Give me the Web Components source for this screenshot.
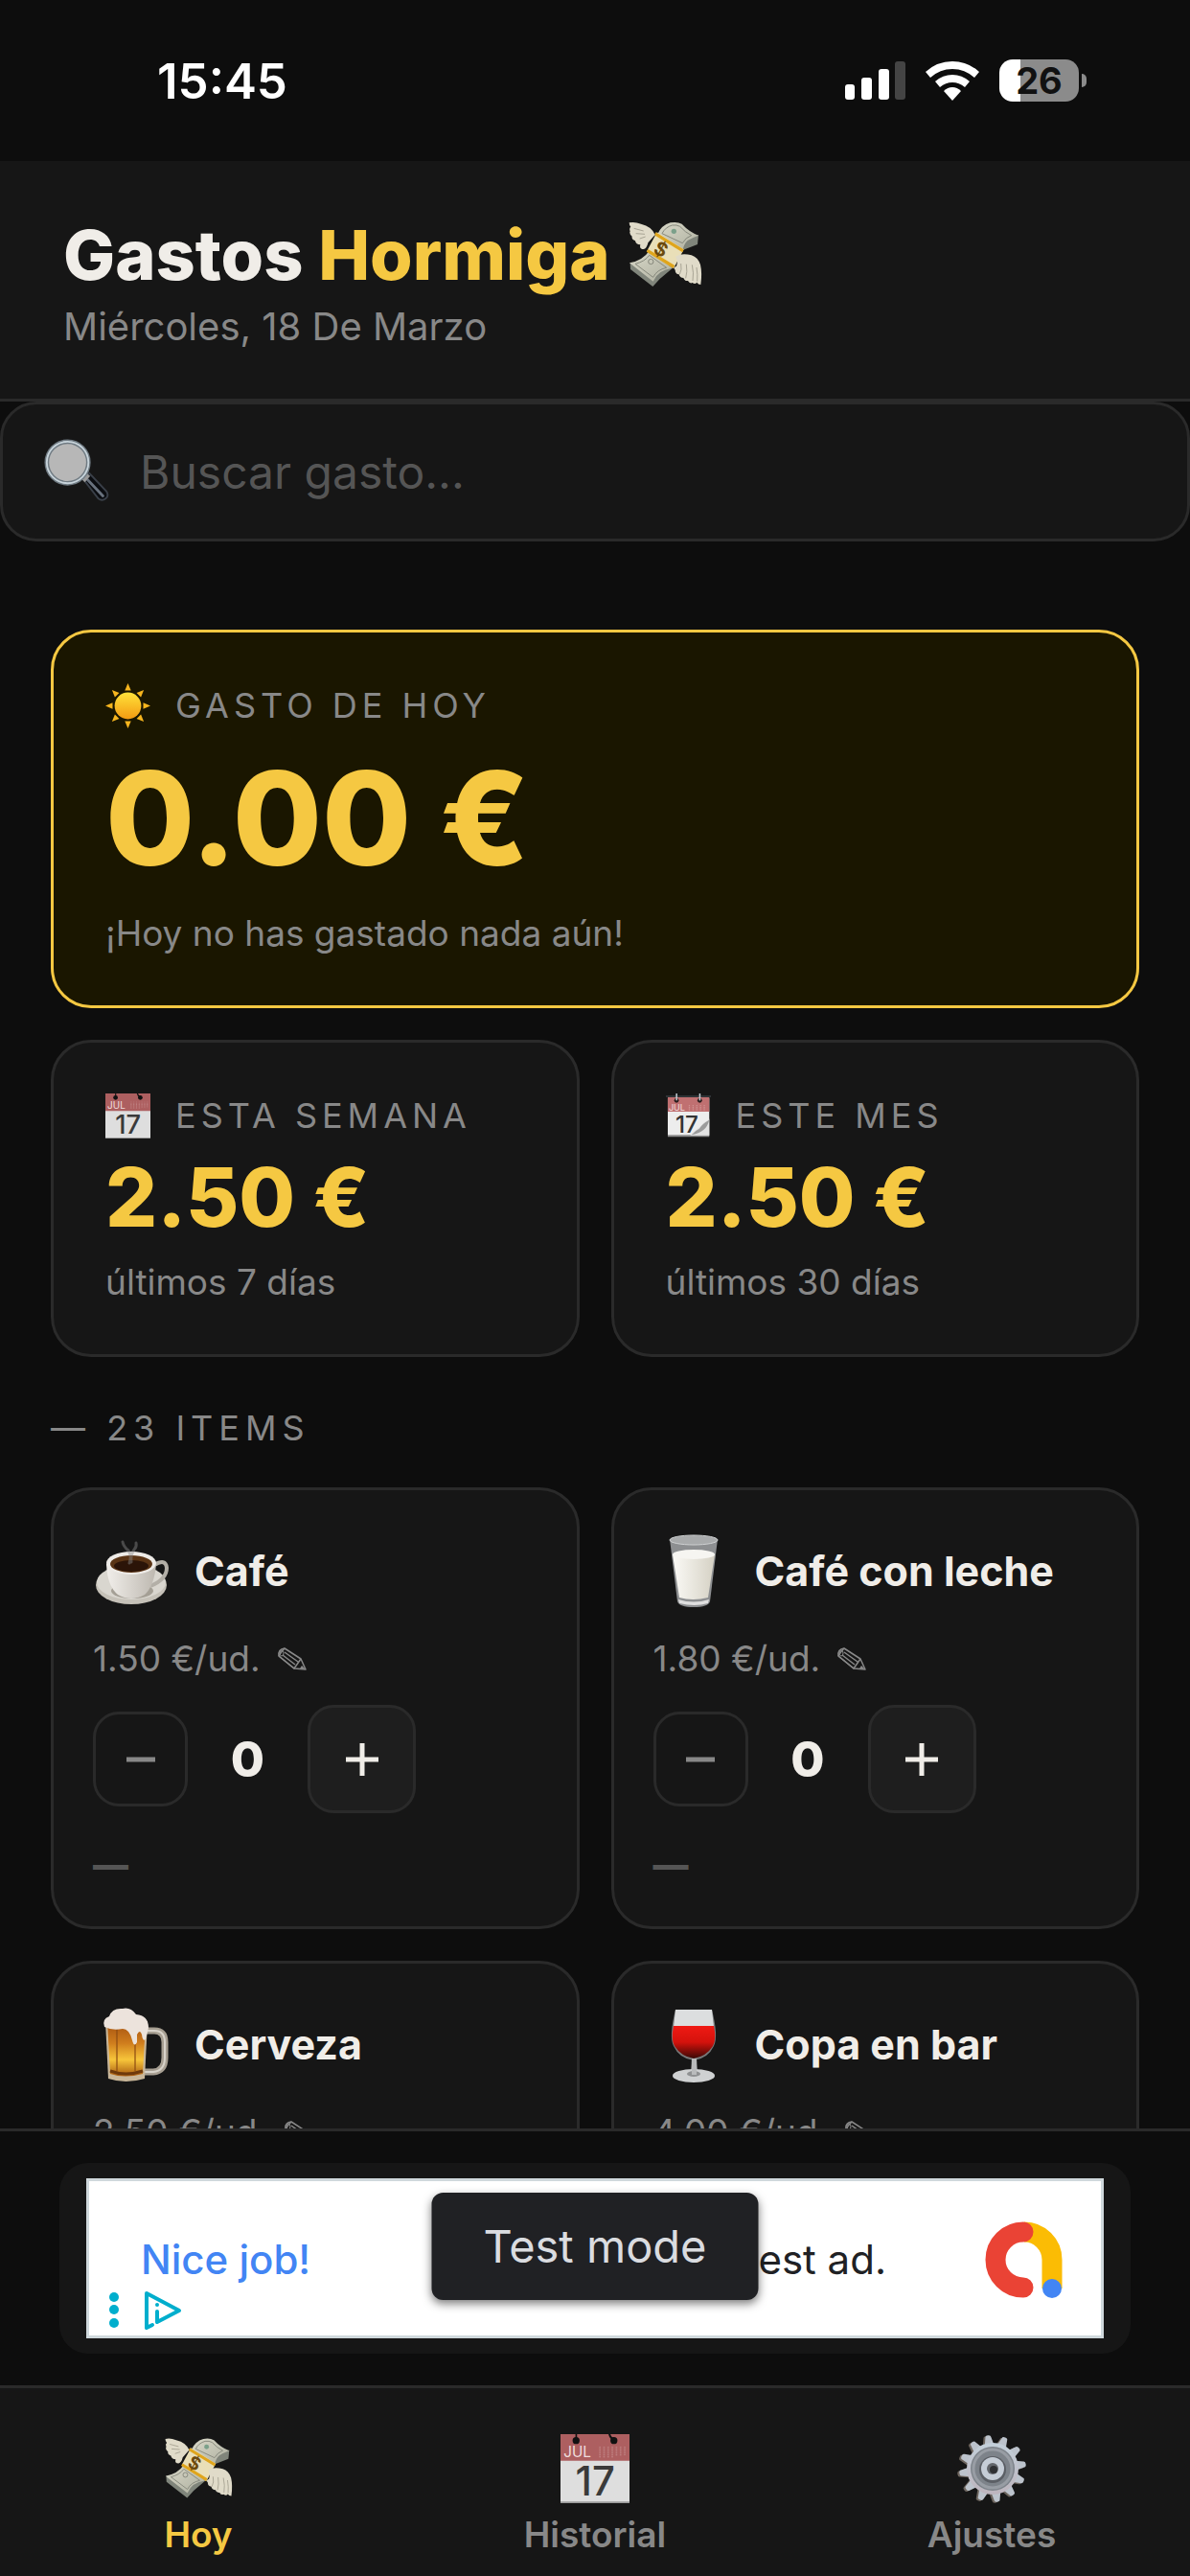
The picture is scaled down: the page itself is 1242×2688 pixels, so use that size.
<!DOCTYPE html>
<html lang="es">
<head>
  <meta charset="UTF-8">
  <meta name="viewport" content="width=device-width, initial-scale=1">
  <title>Gastos Hormiga</title>
  <style>
    * {
      margin: 0;
      padding: 0;
      box-sizing: border-box;
    }
    :root {
      --bg: #0d0d0d;
      --surface: #161616;
      --raised: #1e1e1e;
      --border: #2a2a2a;
      --accent: #f5c842;
      --text: #f0ede8;
      --muted: #888888;
      --dim: #555555;
    }
    body {
      background: var(--bg);
      color: var(--text);
      font-family: Inter, "Liberation Sans", sans-serif;
    }
  </style>
</head>
<body>
  <gastos-app></gastos-app>

  <script>
    const BILLS = `
      <defs>
        <linearGradient id="bill" x1="0" y1="0" x2="1" y2="1">
          <stop offset="0" stop-color="#d9d8c8"/><stop offset="1" stop-color="#aeb0a0"/>
        </linearGradient>
      </defs>
      <path d="M46 166l1 20 70 54 22-24 40-34-60-20z" fill="#80857b"/>
      <path d="M205 128l52-20 3-30-40 14z" fill="#80857b"/>
      <path d="M132 76q12-28 40-36 22-4 36 4 22 24 52 36-22 8-34 16-12 10-16 32z" fill="url(#bill)"/>
      <path d="M106 128q-20 30-62 38l74 58q14-36 60-42z" fill="url(#bill)"/>
      <path d="M146 74q10-20 32-26 14-2 24 4 16 18 36 28-18 6-28 24z" fill="none" stroke="#86887c" stroke-width="3"/>
      <path d="M106 142q-14 20-44 27l56 42q12-24 42-30z" fill="none" stroke="#86887c" stroke-width="3"/>
      <circle cx="183" cy="67" r="8" fill="#7ba08a"/>
      <circle cx="111" cy="162" r="8" fill="none" stroke="#86887c" stroke-width="3"/>
      <path d="M130 70l84 54-32 60-84-54z" fill="#e9dfb8"/>
      <path d="M126 70l88 54-4 9-88-54z" fill="#dfa51c"/>
      <path d="M102 123l84 51-5 9-84-52z" fill="#dfa51c"/>
      <text x="142" y="144" font-family="Inter, sans-serif" font-size="60" font-weight="700" fill="#6b4a0c" text-anchor="middle" transform="rotate(28 142 124)">$</text>
      <path d="M124 78q-10-26-44-34-20-8-37-4 0 8 5 13-6 5-2 14-4 8 6 16-2 10 10 14 2 12 16 12-4 14 10 14 10-2 14-20z" fill="#e0dbc9"/>
      <path d="M58 58l30 8M64 74l28 2M76 90l18-6" stroke="#a8a494" stroke-width="3" fill="none"/>
      <path d="M188 146q20-12 50-4 20 6 28 30 6 26 1 62-8 0-12-7-6 8-14 1-8 4-14-6-10 2-14-9-12 0-14-11-12-2-12-14-8-8 4-12 6-16-3-30z" fill="#e0dbc9"/>
      <path d="M205 168q4 20-4 34M222 170q4 24-2 44M240 172q6 26 2 50M254 180q4 22 2 44" stroke="#a8a494" stroke-width="3" fill="none"/>`;

    const ICONS = {
      money: ["38 24 234 234", BILLS],

      calendar: ["27 28 217 217", `
        <path d="M27 28h217v217H27z" fill="#dedede"/>
        <path d="M27 28h217v84H27z" fill="#ad5f60"/>
        <path d="M27 240h217v5H27z" fill="#9a9a9a"/>
        <circle cx="76" cy="48" r="11" fill="#111"/><path d="M74 28h5v20h-5z" fill="#111"/>
        <circle cx="195" cy="48" r="11" fill="#111"/><path d="M178 28q2 14 16 20l4-6q-12-4-14-14z" fill="#111"/>
        <path d="M151 68v34M164 68v34M177 68v34M190 68v34M203 68v30M216 68v28M229 68v26" stroke="#c48a8a" stroke-width="5" stroke-dasharray="3 3"/>
        <text x="80" y="101" font-family="Inter, sans-serif" font-size="46" font-weight="400" fill="#f0dede" text-anchor="middle">JUL</text>
        <text x="136" y="222" font-family="Inter, sans-serif" font-size="126" font-weight="500" fill="#3a3a3a" text-anchor="middle">17</text>`],

      tearoff: ["27 28 217 217", `
        <path d="M36 50h200v180H36z" fill="#ededed"/>
        <path d="M36 44h200v72H36z" fill="#c07071"/>
        <path d="M36 229h200v8H36z" fill="#8e8e8e"/>
        <path d="M27 37h217v9H27z" fill="#2f3336"/>
        <circle cx="78" cy="62" r="11" fill="#2a1c1c"/><path d="M75 28h7v34h-7z" fill="#c2ccd2"/>
        <circle cx="190" cy="62" r="11" fill="#2a1c1c"/><path d="M187 28h7v34h-7z" fill="#c2ccd2"/>
        <path d="M140 84v26M158 84v26M176 84v26M194 84v26M212 84v26" stroke="#d49a9a" stroke-width="6" stroke-dasharray="4 4"/>
        <text x="80" y="110" font-family="Inter, sans-serif" font-size="42" font-weight="400" fill="#f0dede" text-anchor="middle">JUL</text>
        <text x="128" y="216" font-family="Inter, sans-serif" font-size="112" font-weight="500" fill="#333" text-anchor="middle">17</text>
        <path d="M236 150q-30 18-46 40-22 14-46 40h92z" fill="#e2e2e2"/>
        <path d="M236 156q-34 18-48 42-20 10-38 30 42-8 58-24 20-16 28-48z" fill="#9b9b9b"/>`],

      gear: ["0 0 72 72", `
        <defs>
          <linearGradient id="metal" x1="0" y1="0" x2="0" y2="1">
            <stop offset="0" stop-color="#c3d0da"/><stop offset="1" stop-color="#bdb4bd"/>
          </linearGradient>
        </defs>
        <g fill="#6d655e" transform="translate(-2 1)">${teeth()}</g>
        <g fill="#bcc3cc">${teeth()}</g>
        <circle cx="37" cy="36" r="27" fill="url(#metal)"/>
        <circle cx="37" cy="36" r="23" fill="#7d838a"/>
        <circle cx="37" cy="36" r="20" fill="none" stroke="#989da4" stroke-width="3"/>
        <circle cx="37" cy="37" r="14" fill="#5b5f65"/>
        <circle cx="37" cy="36" r="12" fill="#c5cdd6"/>
        <circle cx="37" cy="36" r="6" fill="#62666b"/>
        <circle cx="38" cy="37" r="4" fill="#2f3133"/>`],

      search: ["0 0 72 72", `
        <path d="M43 44l7-6 19 20q3 5-1 8t-8 0z" fill="#0a0c10" stroke="#3a4049" stroke-width="2"/>
        <path d="M48 45l17 18" stroke="#69727e" stroke-width="3" stroke-linecap="round"/>
        <path d="M40 43l6-6 5 4-6 7z" fill="#9a9a9a"/>
        <circle cx="26" cy="26" r="23" fill="#b7b7b7" stroke="#6f7a82" stroke-width="5"/>
        <circle cx="26" cy="26" r="23" fill="none" stroke="#c7d3da" stroke-width="2"/>`],

      sun: ["0 0 44 44", `
        <defs>
          <linearGradient id="sun" x1="0" y1="0" x2="0" y2="1">
            <stop offset="0" stop-color="#ffe23a"/><stop offset="1" stop-color="#f39a12"/>
          </linearGradient>
        </defs>
        <g fill="#f6b51e">${Array.from({ length: 8 }, (_, i) =>
          `<path d="M22 0l3 7h-6z" transform="rotate(${i * 45} 22 22)"/>`).join("")}</g>
        <circle cx="22" cy="22" r="13" fill="url(#sun)"/>`],

      coffee: ["0 0 84 84", `
        <defs>
          <linearGradient id="cup" x1="0" y1="0" x2="1" y2="0">
            <stop offset="0" stop-color="#f1eeea"/><stop offset="1" stop-color="#bdb8b0"/>
          </linearGradient>
        </defs>
        <ellipse cx="40" cy="57" rx="37" ry="20" fill="#c5c1b8"/>
        <ellipse cx="40" cy="54" rx="36" ry="18" fill="#d9d6cf"/>
        <ellipse cx="41" cy="63" rx="22" ry="8" fill="#a49f95"/>
        <path d="M64 36q12-7 13 3 0 12-17 19" stroke="#b3afa7" stroke-width="4" fill="none"/>
        <path d="M14 35q1 23 12 32 14 8 28 0 10-9 12-32z" fill="url(#cup)"/>
        <ellipse cx="40" cy="34" rx="26" ry="12" fill="#eeebe7"/>
        <ellipse cx="40" cy="35" rx="22" ry="9" fill="#5a3415"/>
        <ellipse cx="40" cy="37" rx="18" ry="6" fill="#2b1408"/>
        <path d="M38 34q3-8-1-13-5-4-6-9M40 33q-1-8 3-13 3-3 2-7" stroke="#8a8a8a" stroke-width="3" stroke-linecap="round" opacity=".45" fill="none"/>`],

      milk: ["0 0 84 84", `
        <defs>
          <linearGradient id="milk" x1="0" y1="0" x2="1" y2="0">
            <stop offset="0" stop-color="#fbfaf6"/><stop offset="1" stop-color="#d5d1c4"/>
          </linearGradient>
        </defs>
        <path d="M17 9l8 65q2 6 17 6t17-6l8-65z" fill="#8d8f91"/>
        <ellipse cx="42" cy="10" rx="25" ry="5" fill="#a9abac" stroke="#cfd1d2" stroke-width="1"/>
        <path d="M20 25l7 45q14 4 30 0l7-45z" fill="url(#milk)"/>
        <ellipse cx="42" cy="25" rx="22" ry="5" fill="#f6f5f1"/>
        <path d="M26 72q16 5 32 0l-1 4q-14 4-30 0z" fill="#dfdfdf"/>`],

      beer: ["0 0 84 84", `
        <defs>
          <linearGradient id="beer" x1="0" y1="0" x2="0" y2="1">
            <stop offset="0" stop-color="#a4500f"/><stop offset="0.4" stop-color="#cf7d1d"/><stop offset="0.7" stop-color="#f7c53a"/><stop offset="1" stop-color="#a85a10"/>
          </linearGradient>
        </defs>
        <path d="M52 28h12q11 0 11 12v16q0 14-12 15H52" fill="none" stroke="#a79f92" stroke-width="7"/>
        <path d="M52 28h12q11 0 11 12v16q0 14-12 15H52" fill="none" stroke="#d8d3ca" stroke-width="2"/>
        <path d="M13 18l3 60q18 6 38 0l3-60z" fill="#c9b79a"/>
        <path d="M15 18l3 55q15 5 34 0l3-55z" fill="url(#beer)"/>
        <path d="M25 24v46M44 28v42" stroke="#8c4b12" stroke-width="2" opacity=".6"/>
        <path d="M18 70q16 6 34 0" stroke="#6f3a0c" stroke-width="3" fill="none"/>
        <path d="M12 24q-3-8 5-11 3-9 14-8 8-2 14 6 13 1 13 14l-3 12q-3 3-4-5-2-6-5 0v8q-3 6-5-2-3-12-10-12-11 2-19-2z" fill="#ece3dc"/>`],

      wine: ["0 0 84 84", `
        <defs>
          <linearGradient id="wine" x1="0" y1="0" x2="0" y2="1">
            <stop offset="0" stop-color="#f01a14"/><stop offset="0.5" stop-color="#d4120c"/><stop offset="1" stop-color="#3a0805"/>
          </linearGradient>
        </defs>
        <path d="M23 6h38q7 28 2 38-6 13-21 15-15-2-21-15-5-10 2-38z" fill="#77797a"/>
        <path d="M23 6h38l2 18H21z" fill="#dcdedf"/>
        <path d="M21 23h42q3 14-1 21-7 11-20 13-13-2-20-13-4-7-1-21z" fill="url(#wine)"/>
        <path d="M40 57h5l1 18h-7z" fill="#b9bbbc"/>
        <ellipse cx="42" cy="75" rx="22" ry="7" fill="#cfd1d2"/>
        <ellipse cx="42" cy="73" rx="7" ry="3" fill="#8f9192"/>
        <path d="M40 57h5v17h-5z" fill="#b9bbbc"/>`],

      pencil: ["0 0 32 24", `
        <g fill="none" stroke="#888" stroke-width="1.5" stroke-linejoin="round">
          <path d="M3 9Q2 2 9 1l17 11 5 11-12-1z"/>
          <path d="M3 9l16 13 7-10M9 1Q5 5 3 9M9 5l14 10M7 8l13 10"/>
        </g>
        <path d="M27 19l4 4-6-1z" fill="#888"/>
        <ellipse cx="6" cy="6" rx="2" ry="3" fill="none" stroke="#888"/>`],

      minus: ["0 0 36 36", `<path d="M3 18h30" stroke="#888" stroke-width="5"/>`],
      plus: ["0 0 36 36", `<path d="M1 18h34M18 1v34" stroke="#f0ede8" stroke-width="5"/>`],

      signal: ["0 0 63 40", `
        <g fill="#fff"><rect y="24" width="10" height="16" rx="3"/><rect x="17" y="17" width="11" height="23" rx="3"/><rect x="35" y="8" width="11" height="32" rx="3"/></g>
        <rect x="52" y="0" width="11" height="40" rx="3" fill="#444"/>`],

      wifi: ["0 0 56 41", `
        <g fill="#fff">
          <path d="M28 0q16 0 28 11l-5 6Q41 8 28 8T5 17l-5-6Q12 0 28 0z"/>
          <path d="M28 14q10 0 18 7l-5 6q-6-5-13-5t-13 5l-5-6q8-7 18-7z"/>
          <path d="M28 27q5 0 9 4l-9 10-9-10q4-4 9-4z"/>
        </g>`],

      admob: ["0 0 80 80", `
        <path d="M40 11a29 29 0 0 1 29 29v30" fill="none" stroke="#fbbc04" stroke-width="21"/>
        <path d="M39 11a29 29 0 0 0 0 58" fill="none" stroke="#ea4335" stroke-width="21" stroke-linecap="round"/>
        <circle cx="69" cy="70" r="10" fill="#4285f4"/>`],

      adchoices: ["0 0 75 40", `
        <g fill="#00aecd"><circle cx="6" cy="6" r="5"/><circle cx="6" cy="19" r="5"/><circle cx="6" cy="33" r="5"/></g>
        <g fill="none" stroke="#00aecd" stroke-width="4" stroke-linejoin="round" stroke-linecap="round">
          <path d="M46 35l-6 3V2l34 18-23 12V21"/>
        </g>
        <circle cx="51" cy="14" r="2" fill="#00aecd"/>`]
    };

    function teeth() {
      return Array.from({ length: 12 }, (_, i) =>
        `<path d="M32 12l2-9q0-2 3-2t3 2l2 9z" transform="rotate(${i * 30 - 8} 37 36)"/>`).join("");
    }

    class AppIcon extends HTMLElement {
      constructor() {
        super();
        this.shadowDOM = this.attachShadow({ mode: "open" });
      }

      connectedCallback() {
        const [viewBox, body] = ICONS[this.getAttribute("name")];
        this.shadowDOM.innerHTML = `
          <style>
            :host {
              display: block;
              flex: none;
              width: var(--icon-width, 72px);
            }
            svg {
              display: block;
              width: 100%;
              overflow: visible;
              letter-spacing: 0;
            }
          </style>
          <svg viewBox="${viewBox}" aria-hidden="true">${body}</svg>
        `;
      }
    }
    customElements.define("app-icon", AppIcon);

    class StatusBar extends HTMLElement {
      constructor() {
        super();
        this.attachShadow({ mode: "open" }).innerHTML = `
          <style>
            :host {
              display: flex;
              align-items: center;
              justify-content: space-between;
              height: 168px;
              padding: 0 108px 0 164px;
              color: #fff;
            }
            time {
              font-size: 51px;
              font-weight: 600;
            }
            .icons, .battery {
              display: flex;
              align-items: center;
            }
            .icons {
              gap: 21px;
            }
            .signal {
              --icon-width: 63px;
            }
            .wifi {
              --icon-width: 56px;
            }
            .battery {
              gap: 3px;
            }
            .level {
              width: 83px;
              border-radius: 14px;
              background: linear-gradient(to right, #fff 27%, #8b8b8b 27%);
              color: #111;
              font-size: 38px;
              font-weight: 700;
              line-height: 44px;
              text-align: center;
            }
            .nub {
              width: 5px;
              height: 14px;
              border-radius: 0 5px 5px 0;
              background: #8b8b8b;
            }
          </style>
          <time>15:45</time>
          <div class="icons">
            <app-icon class="signal" name="signal"></app-icon>
            <app-icon class="wifi" name="wifi"></app-icon>
            <div class="battery"><div class="level">26</div><div class="nub"></div></div>
          </div>
        `;
      }
    }
    customElements.define("status-bar", StatusBar);

    class AppHeader extends HTMLElement {
      constructor() {
        super();
        this.attachShadow({ mode: "open" }).innerHTML = `
          <style>
            * {
              margin: 0;
            }
            :host {
              display: block;
              padding: 50px 66px 48px;
              background: var(--surface);
              border-bottom: 3px solid var(--border);
            }
            h1 {
              display: flex;
              align-items: center;
              gap: 18px;
              font-size: 72px;
              font-weight: 800;
              line-height: 96px;
              --icon-width: 78px;
            }
            em {
              color: var(--accent);
              font-style: normal;
            }
            p {
              color: var(--muted);
              font-size: 40px;
              line-height: 54px;
            }
          </style>
          <h1><span>Gastos <em>Hormiga</em></span><app-icon name="money"></app-icon></h1>
          <p><slot></slot></p>
        `;
      }
    }
    customElements.define("app-header", AppHeader);

    class SearchBox extends HTMLElement {
      constructor() {
        super();
        this.attachShadow({ mode: "open" }).innerHTML = `
          <style>
            :host {
              display: block;
            }
            label {
              display: flex;
              align-items: center;
              gap: 32px;
              padding: 0 43px;
              background: var(--surface);
              border: 3px solid var(--border);
              border-radius: 38px;
              --icon-width: 68px;
            }
            input {
              flex: 1;
              min-width: 0;
              height: 140px;
              padding: 0;
              border: 0;
              outline: 0;
              background: none;
              color: var(--text);
              font: 48px Inter, sans-serif;
            }
            input::placeholder {
              color: var(--dim);
              opacity: 1;
            }
          </style>
          <label>
            <app-icon name="search"></app-icon>
            <input type="text" placeholder="Buscar gasto..." aria-label="Buscar gasto">
          </label>
        `;
      }
    }
    customElements.define("search-box", SearchBox);

    class SpendCard extends HTMLElement {
      constructor() {
        super();
        this.shadowDOM = this.attachShadow({ mode: "open" });
      }

      connectedCallback() {
        this.shadowDOM.innerHTML = `
          <style>
            * {
              margin: 0;
            }
            :host {
              display: block;
              padding: 48px 54px 51px;
              background: var(--surface);
              border: 3px solid var(--border);
              border-radius: 42px;
            }
            :host([today]) {
              grid-column: 1 / -1;
              background: #1a1600;
              border-color: var(--accent);
            }
            h2 {
              display: flex;
              align-items: center;
              gap: 26px;
              color: var(--muted);
              font-size: 36px;
              font-weight: 400;
              letter-spacing: 5px;
              line-height: 57px;
              --icon-width: 47px;
            }
            .amount {
              margin: 14px 0 21px;
              color: var(--accent);
              font-size: 85px;
              font-weight: 800;
              line-height: 86px;
            }
            :host([today]) .amount {
              font-size: 135px;
              line-height: 150px;
            }
            .note {
              color: var(--muted);
              font-size: 37px;
              line-height: 48px;
            }
          </style>
          <h2><app-icon name="${this.getAttribute("icon")}"></app-icon>${this.getAttribute("label")}</h2>
          <p class="amount">${this.getAttribute("amount")}</p>
          <p class="note"><slot></slot></p>
        `;
      }
    }
    customElements.define("spend-card", SpendCard);

    class ExpenseItem extends HTMLElement {
      constructor() {
        super();
        this.shadowDOM = this.attachShadow({ mode: "open" });
        this.count = 0;
      }

      set item(item) {
        this._item = item;
        this.render();
      }

      render() {
        this.shadowDOM.innerHTML = `
          <style>
            * {
              margin: 0;
              padding: 0;
              box-sizing: border-box;
            }
            :host {
              display: block;
              padding: 42px 41px 40px;
              background: var(--surface);
              border: 3px solid var(--border);
              border-radius: 42px;
            }
            button {
              font: inherit;
              color: inherit;
              background: none;
              border: 0;
            }
            .head {
              display: flex;
              align-items: center;
              gap: 22px;
              --icon-width: 84px;
            }
            h3 {
              font-size: 43px;
              font-weight: 700;
              line-height: 84px;
            }
            .price {
              display: flex;
              align-items: center;
              gap: 16px;
              margin: 26px 0 24px;
              color: var(--muted);
              font-size: 37px;
              line-height: 48px;
              --icon-width: 32px;
            }
            .stepper {
              display: flex;
              align-items: center;
              --icon-width: 36px;
            }
            .stepper button {
              display: grid;
              place-items: center;
              width: 99px;
              height: 99px;
              border: 3px solid var(--border);
              border-radius: 27px;
            }
            .stepper .add {
              width: 113px;
              height: 113px;
              background: var(--raised);
            }
            output {
              width: 125px;
              font-size: 51px;
              font-weight: 800;
              text-align: center;
            }
            .total {
              margin-top: 30px;
              color: var(--dim);
              font-size: 37px;
              font-weight: 800;
              line-height: 48px;
            }
          </style>
          <div class="head">
            <app-icon name="${this._item.icon}"></app-icon>
            <h3>${this._item.name}</h3>
          </div>
          <button class="price">${this._item.price} €/ud. <app-icon name="pencil"></app-icon></button>
          <div class="stepper">
            <button class="remove" aria-label="Quitar"><app-icon name="minus"></app-icon></button>
            <output>${this.count}</output>
            <button class="add" aria-label="Añadir"><app-icon name="plus"></app-icon></button>
          </div>
          <p class="total">—</p>
        `;

        this.shadowDOM.querySelector(".add").addEventListener("click", () => this.change(1));
        this.shadowDOM.querySelector(".remove").addEventListener("click", () => this.change(-1));
      }

      change(step) {
        this.count = Math.max(0, this.count + step);
        this.shadowDOM.querySelector("output").textContent = this.count;
        this.shadowDOM.querySelector(".total").textContent =
          this.count > 0 ? `${(this.count * this._item.price).toFixed(2)} €` : "—";
      }
    }
    customElements.define("expense-item", ExpenseItem);

    class ExpenseList extends HTMLElement {
      constructor() {
        super();
        this.shadowDOM = this.attachShadow({ mode: "open" });
      }

      set items(items) {
        this.shadowDOM.innerHTML = `
          <style>
            :host {
              display: grid;
              grid-template-columns: 1fr 1fr;
              gap: 33px;
            }
          </style>
        `;
        items.forEach((item) => {
          const element = document.createElement("expense-item");
          element.item = item;
          this.shadowDOM.appendChild(element);
        });
      }
    }
    customElements.define("expense-list", ExpenseList);

    class AdBanner extends HTMLElement {
      constructor() {
        super();
        this.attachShadow({ mode: "open" }).innerHTML = `
          <style>
            :host {
              display: block;
              padding: 33px 62px;
              border-top: 3px solid var(--border);
            }
            .frame {
              padding: 16px 28px;
              background: var(--surface);
              border-radius: 30px;
            }
            .ad {
              position: relative;
              display: flex;
              align-items: center;
              gap: 104px;
              height: 167px;
              box-sizing: border-box;
              padding: 2px 40px 0 54px;
              background: #fff;
              border: 3px solid #cfd8dc;
              color: #202124;
              font-size: 42px;
              line-height: 54px;
              --icon-width: 80px;
            }
            a {
              margin-right: auto;
              color: #4285f4;
              font-weight: 500;
              text-decoration: none;
            }
            .mode {
              position: absolute;
              top: 12px;
              left: 50%;
              transform: translateX(-50%);
              padding: 0 54px;
              background: #202124;
              border-radius: 12px;
              box-shadow: 0 4px 10px rgba(0, 0, 0, .5);
              color: #dadce0;
              font-size: 47px;
              line-height: 112px;
              white-space: nowrap;
            }
            .choices {
              position: absolute;
              left: 20px;
              bottom: 6px;
              --icon-width: 75px;
            }
          </style>
          <div class="frame">
            <div class="ad">
              <a href="#">Nice job!</a>
              <span>est ad.</span>
              <app-icon name="admob"></app-icon>
              <app-icon class="choices" name="adchoices"></app-icon>
              <div class="mode">Test mode</div>
            </div>
          </div>
        `;
      }
    }
    customElements.define("ad-banner", AdBanner);

    class TabBar extends HTMLElement {
      constructor() {
        super();
        this.attachShadow({ mode: "open" }).innerHTML = `
          <style>
            :host {
              display: block;
              background: var(--surface);
              border-top: 3px solid var(--border);
            }
            nav {
              display: grid;
              grid-template-columns: repeat(3, 1fr);
              padding: 48px 0 19px;
            }
            a {
              display: flex;
              flex-direction: column;
              align-items: center;
              gap: 9px;
              color: var(--muted);
              font-size: 37px;
              font-weight: 600;
              line-height: 48px;
              text-decoration: none;
            }
            a[aria-current] {
              color: var(--accent);
            }
          </style>
          <nav>
            <a href="#hoy" aria-current="page"><app-icon name="money"></app-icon>Hoy</a>
            <a href="#historial"><app-icon name="calendar"></app-icon>Historial</a>
            <a href="#ajustes"><app-icon name="gear"></app-icon>Ajustes</a>
          </nav>
        `;
      }
    }
    customElements.define("tab-bar", TabBar);

    class GastosApp extends HTMLElement {
      constructor() {
        super();
        this.shadowDOM = this.attachShadow({ mode: "open" });
        this.shadowDOM.innerHTML = `
          <style>
            :host {
              display: flex;
              flex-direction: column;
              height: 100vh;
            }
            main {
              flex: 1;
              min-height: 0;
              overflow: hidden;
            }
            .content {
              padding: 92px 53px 0;
            }
            .summary {
              display: grid;
              grid-template-columns: 1fr 1fr;
              gap: 33px;
            }
            h2 {
              margin: 50px 0 38px;
              color: var(--muted);
              font-size: 36px;
              font-weight: 400;
              letter-spacing: 6px;
              line-height: 48px;
            }
          </style>
          <status-bar></status-bar>
          <app-header>Miércoles, 18 De Marzo</app-header>
          <main>
            <search-box></search-box>
            <div class="content">
              <section class="summary">
                <spend-card today icon="sun" label="GASTO DE HOY" amount="0.00 €">¡Hoy no has gastado nada aún!</spend-card>
                <spend-card icon="calendar" label="ESTA SEMANA" amount="2.50 €">últimos 7 días</spend-card>
                <spend-card icon="tearoff" label="ESTE MES" amount="2.50 €">últimos 30 días</spend-card>
              </section>
              <h2>— 23 ITEMS</h2>
              <expense-list></expense-list>
            </div>
          </main>
          <ad-banner></ad-banner>
          <tab-bar></tab-bar>
        `;
        this.shadowDOM.querySelector("expense-list").items = [
          { icon: "coffee", name: "Café", price: "1.50" },
          { icon: "milk", name: "Café con leche", price: "1.80" },
          { icon: "beer", name: "Cerveza", price: "2.50" },
          { icon: "wine", name: "Copa en bar", price: "4.00" }
        ];
      }
    }
    customElements.define("gastos-app", GastosApp);
  </script>
</body>
</html>
